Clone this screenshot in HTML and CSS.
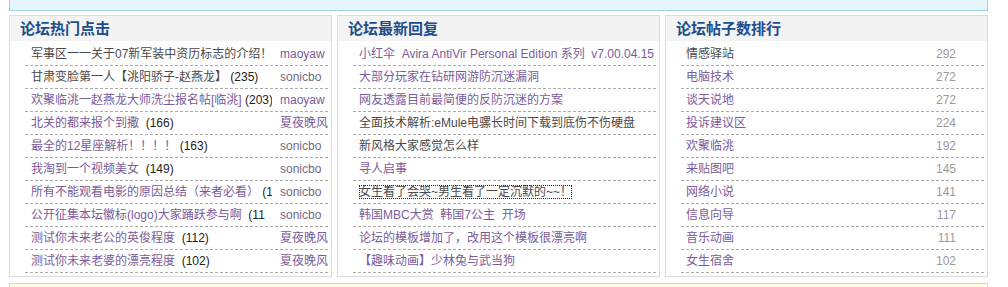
FILE: index.html
```html
<!DOCTYPE html>
<html lang="zh-CN">
<head>
  <meta charset="UTF-8" />
  <title>论坛统计</title>
  <link rel="stylesheet" href="styles.css">
</head>
<body>
  <div class="page">
    <div class="topbar"></div>

    <div class="panels">
      <!-- 热门点击 -->
      <div class="panel">
        <h2>论坛热门点击</h2>
        <ul class="list hot">
          <li><span class="title"><a href="#">军事区一一关于07新军装中资历标志的介绍！</a></span><span class="author v">maoyaw</span></li>
          <li><span class="title"><a href="#">甘肃变脸第一人【洮阳骄子-赵燕龙】</a> (235)</span><span class="author s">sonicbo</span></li>
          <li><span class="title"><a href="#" class="v">欢聚临洮一赵燕龙大师洗尘报名帖[临洮]</a> (203)</span><span class="author v">maoyaw</span></li>
          <li><span class="title"><a href="#" class="v">北关的都来报个到撒</a>&nbsp; (166)</span><span class="author v">夏夜晚风</span></li>
          <li><span class="title"><a href="#" class="v">最全的12星座解析！！！！</a> (163)</span><span class="author s">sonicbo</span></li>
          <li><span class="title"><a href="#" class="v">我淘到一个视频美女</a>&nbsp; (149)</span><span class="author s">sonicbo</span></li>
          <li><span class="title"><a href="#" class="v">所有不能观看电影的原因总结（来者必看）</a> (1</span><span class="author s">sonicbo</span></li>
          <li><span class="title"><a href="#" class="v">公开征集本坛徽标(logo)大家踊跃参与啊</a>&nbsp; (11</span><span class="author s">sonicbo</span></li>
          <li><span class="title"><a href="#" class="v">测试你未来老公的英俊程度</a>&nbsp; (112)</span><span class="author v">夏夜晚风</span></li>
          <li><span class="title"><a href="#" class="v">测试你未来老婆的漂亮程度</a>&nbsp; (102)</span><span class="author v">夏夜晚风</span></li>
        </ul>
      </div>

      <!-- 最新回复 -->
      <div class="panel">
        <h2>论坛最新回复</h2>
        <ul class="list">
          <li><a href="#" class="v">小红伞&nbsp; Avira AntiVir Personal Edition 系列&nbsp; v7.00.04.15</a></li>
          <li><a href="#" class="v">大部分玩家在钻研网游防沉迷漏洞</a></li>
          <li><a href="#" class="v">网友透露目前最简便的反防沉迷的方案</a></li>
          <li><a href="#">全面技术解析:eMule电骡长时间下载到底伤不伤硬盘</a></li>
          <li><a href="#">新风格大家感觉怎么样</a></li>
          <li><a href="#" class="v">寻人启事</a></li>
          <li><a href="#" class="focus">女生看了会哭~男生看了一定沉默的~~！</a></li>
          <li><a href="#" class="v">韩国MBC大赏&nbsp; 韩国7公主&nbsp; 开场</a></li>
          <li><a href="#" class="v">论坛的模板增加了，改用这个模板很漂亮啊</a></li>
          <li><a href="#" class="v">【趣味动画】少林兔与武当狗</a></li>
        </ul>
      </div>

      <!-- 帖子数排行 -->
      <div class="panel">
        <h2>论坛帖子数排行</h2>
        <ul class="list rank">
          <li><a href="#">情感驿站</a><span class="num">292</span></li>
          <li><a href="#" class="v">电脑技术</a><span class="num">272</span></li>
          <li><a href="#" class="v">谈天说地</a><span class="num">272</span></li>
          <li><a href="#" class="v">投诉建议区</a><span class="num">224</span></li>
          <li><a href="#" class="v">欢聚临洮</a><span class="num">192</span></li>
          <li><a href="#" class="v">来贴图吧</a><span class="num">145</span></li>
          <li><a href="#" class="v">网络小说</a><span class="num">141</span></li>
          <li><a href="#" class="v">信息向导</a><span class="num">117</span></li>
          <li><a href="#" class="v">音乐动画</a><span class="num">111</span></li>
          <li><a href="#" class="v">女生宿舍</a><span class="num">102</span></li>
        </ul>
      </div>
    </div>

    <div class="notice"></div>
  </div>
</body>
</html>
```

FILE: styles.css
```css
body {
  margin: 0;
  background-color: #fff;
  font-family: "Liberation Sans", "Noto Sans CJK SC", sans-serif;
  font-size: 12px;
  color: #222;
}

.page {
  width: 979px;
  margin-left: 9px;
}

.topbar {
  height: 10px;
  background-color: #e6f5fb;
  border: 1px solid #9fd2e4;
  border-top: none;
}

.panels {
  display: grid;
  grid-template-columns: repeat(3, 323px);
  gap: 5px;
  margin-top: 4px;
}

.panel {
  border: 1px solid #dadada;
  padding-bottom: 3px;
  background-color: #fff;
}

.panel h2 {
  margin: 0;
  height: 25px;
  line-height: 24px;
  padding-left: 10px;
  background-color: #f3f3f3;
  color: #1d4e8c;
  font-family: "Noto Sans CJK SC", sans-serif;
  font-size: 15px;
  font-weight: bold;
}

.list {
  list-style: none;
  margin: 2px 3px 0 15px;
  padding: 0;
}

.list li {
  display: flex;
  align-items: center;
  height: 22px;
  line-height: 22px;
  padding-left: 6px;
  border-bottom: 1px dashed #ababab;
  white-space: nowrap;
}

.list a {
  color: #4a4a4a;
  text-decoration: none;
}

.list a.v {
  color: #7a5c9a;
}

.list a.focus {
  outline: 1px dotted #222;
  outline-offset: -1px;
  line-height: 14px;
}

.hot .title {
  flex: 0 0 241px;
  overflow: hidden;
  color: #222;
}

.hot .author {
  margin-left: 8px;
}

.author.v {
  color: #7a5c9a;
}

.author.s {
  color: #726a86;
}

.rank li {
  justify-content: space-between;
  padding-left: 5px;
  padding-right: 28px;
}

.rank .num {
  color: #9a9a9a;
}

.notice {
  margin-top: 6px;
  height: 10px;
  background-color: #fffbe3;
  border: 1px solid #e9dd95;
  border-bottom: none;
}
```
